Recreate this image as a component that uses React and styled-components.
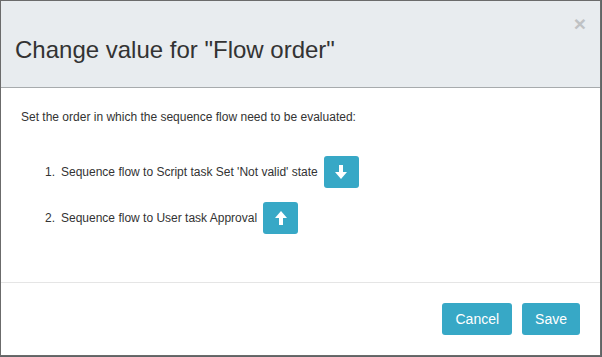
import styled, { createGlobalStyle } from 'styled-components';

const GlobalStyle = createGlobalStyle`
  html, body {
    margin: 0;
    padding: 0;
    background: #5f6466;
  }
  body {
    font-family: "Liberation Sans", Arial, sans-serif;
    color: #333;
  }
`;

const Dialog = styled.div`
  width: 601px;
  height: 356px;
  box-sizing: border-box;
  border: 1px solid #6b6b6b;
  background: #fff;
  display: flex;
  flex-direction: column;
`;

const Header = styled.div`
  position: relative;
  height: 87px;
  box-sizing: border-box;
  background: #e8ecef;
  border-bottom: 1px solid #a7abad;
  padding: 35px 14px 0;
`;

const Title = styled.h4`
  margin: 0;
  font-size: 24px;
  font-weight: normal;
  line-height: 28px;
  color: #333;
`;

const Close = styled.button`
  position: absolute;
  top: 12px;
  right: 14px;
  border: 0;
  background: none;
  padding: 0;
  font-family: "Liberation Sans", Arial, sans-serif;
  font-size: 21px;
  font-weight: bold;
  line-height: 21px;
  color: #bfc2c4;
  cursor: pointer;
`;

const Body = styled.div`
  flex: 1;
  padding: 21px 20px 0;
  border-bottom: 1px solid #e5e5e5;
  font-size: 12px;
`;

const Intro = styled.p`
  margin: 0 0 31px;
  line-height: 16px;
`;

const OrderList = styled.ol`
  list-style: none;
  margin: 0;
  padding: 0 0 0 24px;
  display: flex;
  flex-direction: column;
  gap: 14px;
`;

const Item = styled.li`
  display: flex;
  align-items: center;
  height: 32px;
`;

const Num = styled.span`
  width: 16px;
`;

const Label = styled.span`
  margin-right: 6px;
`;

const IconButton = styled.button`
  width: 35px;
  height: 32px;
  border: 0;
  border-radius: 3px;
  background: #37a8c6;
  display: flex;
  align-items: center;
  justify-content: center;
  padding: 0;
  cursor: pointer;
`;

const Footer = styled.div`
  display: flex;
  justify-content: flex-end;
  gap: 10px;
  padding: 20px 20px 20px;
`;

const Button = styled.button`
  height: 32px;
  padding: 0 ${(p) => p.$pad}px;
  border: 0;
  border-radius: 3px;
  background: #37a8c6;
  color: #fff;
  font-family: "Liberation Sans", Arial, sans-serif;
  font-size: 14px;
  cursor: pointer;
`;

const Arrow = ({ up }) => (
  <svg width="12" height="14" viewBox="0 0 12 14" style={{ transform: up ? 'rotate(180deg)' : 'none' }}>
    <rect x="4" y="0" width="4" height="8" fill="#fff" />
    <polygon points="0,7 12,7 6,14" fill="#fff" />
  </svg>
);

export default function App() {
  return (
    <>
      <GlobalStyle />
      <Dialog>
        <Header>
          <Title>Change value for "Flow order"</Title>
          <Close>×</Close>
        </Header>
        <Body>
          <Intro>Set the order in which the sequence flow need to be evaluated:</Intro>
          <OrderList>
            <Item>
              <Num>1.</Num>
              <Label>Sequence flow to Script task Set 'Not valid' state</Label>
              <IconButton><Arrow /></IconButton>
            </Item>
            <Item>
              <Num>2.</Num>
              <Label>Sequence flow to User task Approval</Label>
              <IconButton><Arrow up /></IconButton>
            </Item>
          </OrderList>
        </Body>
        <Footer>
          <Button $pad={13}>Cancel</Button>
          <Button $pad={13}>Save</Button>
        </Footer>
      </Dialog>
    </>
  );
}
